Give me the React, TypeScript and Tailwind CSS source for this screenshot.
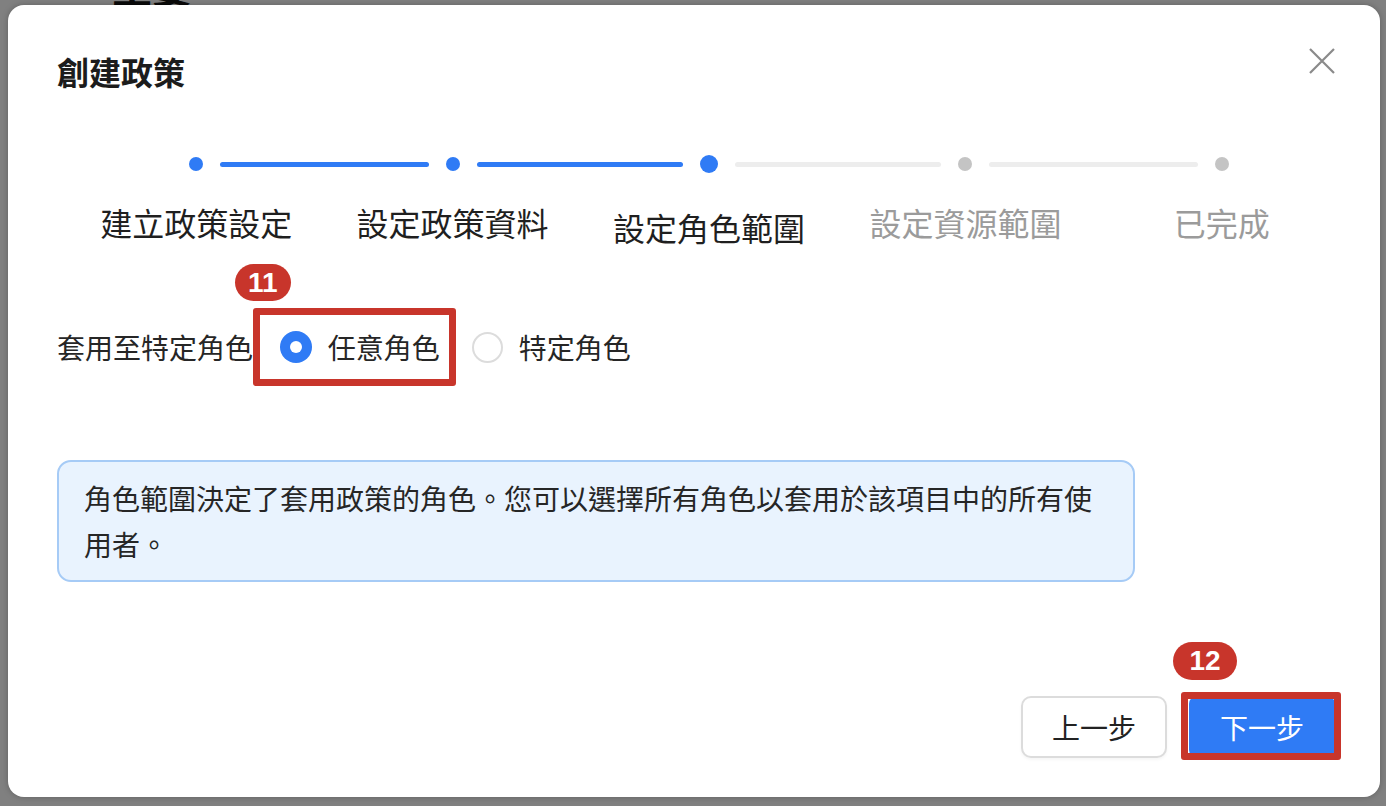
import React, { useState } from "react";

const steps = ["建立政策設定", "設定政策資料", "設定角色範圍", "設定資源範圍", "已完成"];
const ACTIVE = 2;

function Badge({ n, className }: { n: string; className: string }) {
  return (
    <span
      className={`absolute z-20 flex items-center justify-center rounded-full bg-[#c8352b] text-[28px] font-bold leading-none text-white [font-family:'Liberation_Sans',Arial,sans-serif] ${className}`}
    >
      {n}
    </span>
  );
}

function Radio({ checked }: { checked: boolean }) {
  return checked ? (
    <span className="flex h-[32px] w-[32px] items-center justify-center rounded-full bg-[#2f7bf5]">
      <span className="h-[12px] w-[12px] rounded-full bg-white" />
    </span>
  ) : (
    <span className="h-[31px] w-[31px] rounded-full border-2 border-[#dcdcdc] bg-white" />
  );
}

export default function App() {
  const [role, setRole] = useState<"any" | "specific">("any");

  return (
    <div className="relative min-h-screen w-full overflow-hidden bg-[#808080] [font-family:'Noto_Sans_CJK_TC','Noto_Sans',sans-serif]">
      {/* page behind the overlay */}
      <div className="pl-[112px] -mt-[34px] text-[40px] font-bold leading-[40px] text-[#0a0a0a]">主要</div>

      {/* dialog */}
      <div className="absolute left-[8px] top-[5px] flex h-[792px] w-[1372px] flex-col rounded-[16px] bg-white pl-[49px] pr-[45px] pt-[46px] shadow-[0_0_6px_rgba(0,0,0,0.25)]">
        <div className="flex items-center justify-between">
          <h2 className="text-[32px] font-bold leading-[40px] text-[#1c1c1c]">創建政策</h2>
          <button className="-mt-[21px] text-[#8a8a8a]">
            <svg width="26" height="26" viewBox="0 0 26 26" fill="none" stroke="currentColor" strokeWidth="2.2">
              <path d="M1 1L25 25M25 1L1 25" />
            </svg>
          </button>
        </div>

        {/* stepper */}
        <div className="ml-[11px] mt-[64px] grid w-[1282px] grid-cols-5">
          {steps.map((s, i) => (
            <div key={s} className="flex flex-col items-center">
              <div className="flex h-[18px] w-full items-center">
                <div className="flex-1 pr-[17px]">
                  {i > 0 && (
                    <div className={`h-[5px] rounded-l-none rounded-r-full ${i <= ACTIVE ? "bg-[#2f7bf5]" : "bg-[#ededed]"}`} />
                  )}
                </div>
                <span
                  className={`rounded-full ${
                    i === ACTIVE
                      ? "h-[18px] w-[18px] bg-[#2f7bf5]"
                      : i < ACTIVE
                      ? "h-[14px] w-[14px] bg-[#2f7bf5]"
                      : "h-[14px] w-[14px] bg-[#c4c4c4]"
                  }`}
                />
                <div className="flex-1 pl-[17px]">
                  {i < steps.length - 1 && (
                    <div className={`h-[5px] rounded-l-full ${i < ACTIVE ? "bg-[#2f7bf5]" : "bg-[#ededed]"}`} />
                  )}
                </div>
              </div>
              <div
                className={`whitespace-nowrap text-[32px] leading-[40px] ${
                  i === ACTIVE ? "mt-[34px] text-[#1f1f1f]" : i < ACTIVE ? "mt-[29px] text-[#1f1f1f]" : "mt-[29px] text-[#9b9b9b]"
                }`}
              >
                {s}
              </div>
            </div>
          ))}
        </div>

        {/* role scope */}
        <div className="mt-[80px] flex h-[40px] items-center text-[28px] leading-[40px] text-[#262626]">
          <span>套用至特定角色:</span>
          <button onClick={() => setRole("any")} className="relative ml-[19px] flex h-[32px] items-center gap-4">
            <Radio checked={role === "any"} />
            <span>任意角色</span>
            <span className="pointer-events-none absolute -bottom-[23px] -left-[27px] -right-[16px] -top-[23px] rounded-[3px] border-[7px] border-[#c8352b]" />
            <Badge n="11" className="-left-[45px] -top-[67px] h-[37px] w-[56px]" />
          </button>
          <button onClick={() => setRole("specific")} className="ml-[32px] flex h-[32px] items-center gap-4">
            <Radio checked={role === "specific"} />
            <span>特定角色</span>
          </button>
        </div>

        <div className="mt-[93px] w-[1078px] rounded-[14px] border-2 border-[#a6cbf6] bg-[#e9f3fe] px-[25px] py-[13px] text-[28px] leading-[46px] text-[#262626]">
          角色範圍決定了套用政策的角色。您可以選擇所有角色以套用於該項目中的所有使用者。
        </div>

        {/* footer */}
        <div className="mt-[114px] flex justify-end gap-[22px]">
          <button className="h-[62px] w-[146px] rounded-[10px] border-2 border-[#dcdcdc] bg-white text-[28px] text-[#222] shadow-[0_2px_3px_rgba(0,0,0,0.04)]">
            上一步
          </button>
          <button className="relative h-[62px] w-[146px] rounded-[8px] bg-[#2f7bf5] text-[28px] text-white">
            下一步
            <span className="pointer-events-none absolute -bottom-[2px] -left-[8px] -right-[6px] -top-[4px] rounded-[3px] border-[7px] border-[#c8352b]" />
            <Badge n="12" className="-left-[16px] -top-[54px] h-[38px] w-[64px]" />
          </button>
        </div>
      </div>
    </div>
  );
}
